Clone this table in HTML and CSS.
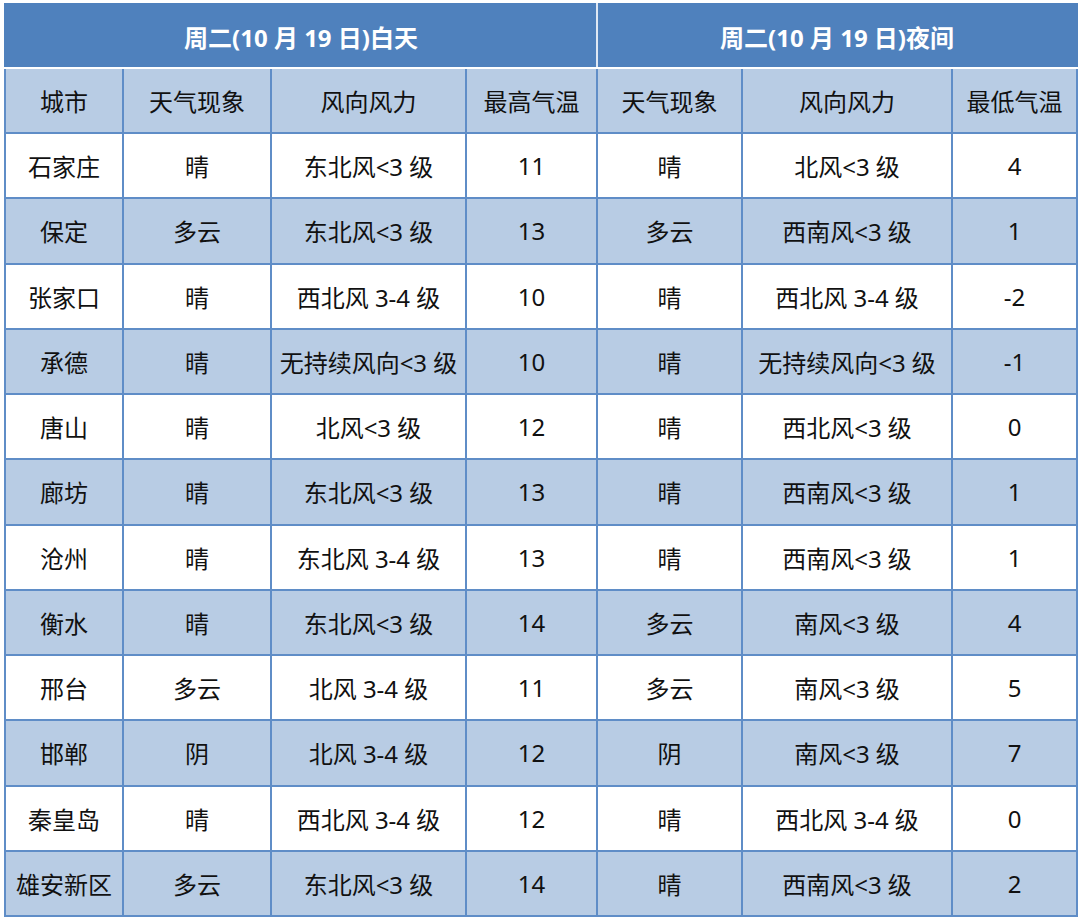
FILE: index.html
```html
<!DOCTYPE html>
<html lang="zh">
<head>
<meta charset="utf-8">
<link rel="stylesheet" href="styles.css">
</head>
<body>
<table class="forecast">
  <colgroup>
    <col class="c1"><col class="c2"><col class="c3"><col class="c4"><col class="c5"><col class="c6"><col class="c7">
  </colgroup>
  <thead>
    <tr class="period">
      <th colspan="4" class="day">周二(10 月 19 日)白天</th>
      <th colspan="3" class="night">周二(10 月 19 日)夜间</th>
    </tr>
    <tr class="labels">
      <th>城市</th><th>天气现象</th><th>风向风力</th><th>最高气温</th><th>天气现象</th><th>风向风力</th><th>最低气温</th>
    </tr>
  </thead>
  <tbody>
    <tr><td>石家庄</td><td>晴</td><td>东北风&lt;3 级</td><td>11</td><td>晴</td><td>北风&lt;3 级</td><td>4</td></tr>
    <tr><td>保定</td><td>多云</td><td>东北风&lt;3 级</td><td>13</td><td>多云</td><td>西南风&lt;3 级</td><td>1</td></tr>
    <tr><td>张家口</td><td>晴</td><td>西北风 3-4 级</td><td>10</td><td>晴</td><td>西北风 3-4 级</td><td>-2</td></tr>
    <tr><td>承德</td><td>晴</td><td>无持续风向&lt;3 级</td><td>10</td><td>晴</td><td>无持续风向&lt;3 级</td><td>-1</td></tr>
    <tr><td>唐山</td><td>晴</td><td>北风&lt;3 级</td><td>12</td><td>晴</td><td>西北风&lt;3 级</td><td>0</td></tr>
    <tr><td>廊坊</td><td>晴</td><td>东北风&lt;3 级</td><td>13</td><td>晴</td><td>西南风&lt;3 级</td><td>1</td></tr>
    <tr><td>沧州</td><td>晴</td><td>东北风 3-4 级</td><td>13</td><td>晴</td><td>西南风&lt;3 级</td><td>1</td></tr>
    <tr><td>衡水</td><td>晴</td><td>东北风&lt;3 级</td><td>14</td><td>多云</td><td>南风&lt;3 级</td><td>4</td></tr>
    <tr><td>邢台</td><td>多云</td><td>北风 3-4 级</td><td>11</td><td>多云</td><td>南风&lt;3 级</td><td>5</td></tr>
    <tr><td>邯郸</td><td>阴</td><td>北风 3-4 级</td><td>12</td><td>阴</td><td>南风&lt;3 级</td><td>7</td></tr>
    <tr><td>秦皇岛</td><td>晴</td><td>西北风 3-4 级</td><td>12</td><td>晴</td><td>西北风 3-4 级</td><td>0</td></tr>
    <tr><td>雄安新区</td><td>多云</td><td>东北风&lt;3 级</td><td>14</td><td>晴</td><td>西南风&lt;3 级</td><td>2</td></tr>
  </tbody>
</table>
</body>
</html>
```

FILE: styles.css
```css
html, body {
  margin: 0;
  padding: 0;
  background: #ffffff;
}
body {
  padding: 3px 0 0 4px;
  font-family: "Noto Sans", "Noto Sans CJK SC", sans-serif;
}
.forecast {
  border-collapse: collapse;
  table-layout: fixed;
  width: 1072px;
  font-size: 24px;
  color: #111111;
}
.c1 { width: 118px; }
.c2 { width: 148px; }
.c3 { width: 195px; }
.c4 { width: 131px; }
.c5 { width: 145px; }
.c6 { width: 210px; }
.c7 { width: 125px; }

.forecast th,
.forecast td {
  border: 2px solid #5f8dc7;
  padding: 0;
  text-align: center;
  vertical-align: middle;
  white-space: nowrap;
  height: 63px;
  font-weight: normal;
}
.period th {
  background: #4f81bd;
  color: #ffffff;
  font-weight: bold;
  border-color: #4f81bd;
  border-bottom: 2px solid #ffffff;
  height: 62px;
}
.period th.day {
  border-right: 2px solid #dfe8f4;
}
.labels th {
  background: #b8cce4;
  border-top: 2px solid #ffffff;
}
.forecast tbody td {
  height: 63.25px;
}
.forecast tbody tr:nth-child(even) td {
  background: #b8cce4;
}
.forecast tbody tr:nth-child(odd) td {
  background: #ffffff;
}
```
